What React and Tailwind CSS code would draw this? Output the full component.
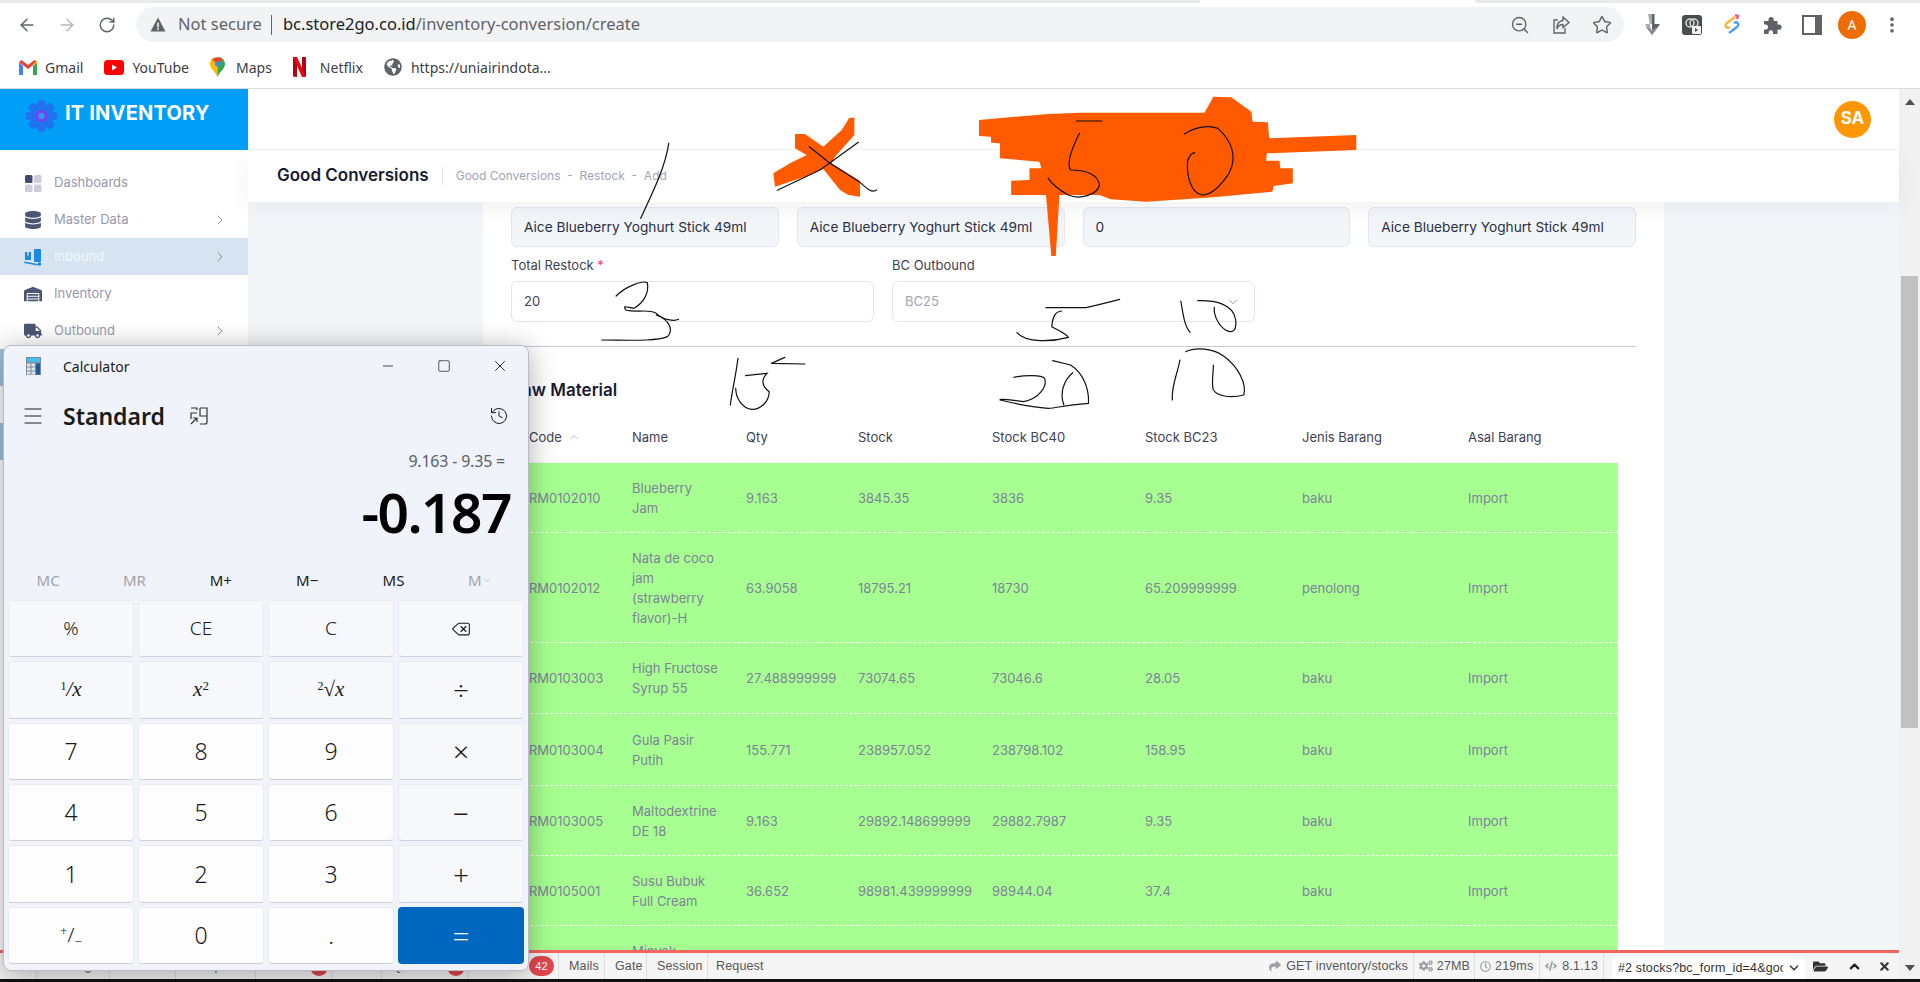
import React from "react";
import { ArrowLeft, ArrowRight, RotateCw, ZoomOut, Star, MoreVertical, ChevronRight, ChevronDown, ChevronUp, Delete, X, Minus, Square, Menu, History } from "lucide-react";
import { FaDatabase, FaTruck, FaWarehouse, FaCogs, FaRegClock, FaCode, FaFolderOpen, FaShare, FaGlobeAmericas } from "react-icons/fa";

const rows = [
  ["RM0102010", ["Blueberry", "Jam"], "9.163", "3845.35", "3836", "9.35", "baku", "Import"],
  ["RM0102012", ["Nata de coco", "jam", "(strawberry", "flavor)-H"], "63.9058", "18795.21", "18730", "65.209999999", "penolong", "Import"],
  ["RM0103003", ["High Fructose", "Syrup 55"], "27.488999999", "73074.65", "73046.6", "28.05", "baku", "Import"],
  ["RM0103004", ["Gula Pasir", "Putih"], "155.771", "238957.052", "238798.102", "158.95", "baku", "Import"],
  ["RM0103005", ["Maltodextrine", "DE 18"], "9.163", "29892.148699999", "29882.7987", "9.35", "baku", "Import"],
  ["RM0105001", ["Susu Bubuk", "Full Cream"], "36.652", "98981.439999999", "98944.04", "37.4", "baku", "Import"],
];
const rowPad = ["py-[14.5px]", "py-[14.5px]", "py-[15px]", "py-[15.5px]", "py-[14.5px]", "py-[14.5px]"];
const heads = ["Code", "Name", "Qty", "Stock", "Stock BC40", "Stock BC23", "Jenis Barang", "Asal Barang"];
const widths = ["w-[121px]", "w-[114px]", "w-[112px]", "w-[134px]", "w-[153px]", "w-[157px]", "w-[166px]", "w-[150px]"];

function Bookmark({ icon, label, cls }) {
  return (
    <div className={"flex items-center gap-[8px] " + cls}>
      {icon}
      <span>{label}</span>
    </div>
  );
}

function Chrome() {
  return (
    <div className="font-['Noto_Sans',sans-serif] text-[#5f6368]">
      <div className="h-[3px] flex bg-white">
        <div className="w-[1200px] bg-[#e8eaed]" />
        <div className="w-[275px]" />
        <div className="flex-1 bg-[#e8eaed] rounded-bl-[4px]" />
      </div>
      <div className="h-[43px] flex items-center bg-white">
        <ArrowLeft size={20} strokeWidth={1.8} className="ml-[17px]" />
        <ArrowRight size={20} strokeWidth={1.8} className="ml-[20px] text-[#b5b8bc]" />
        <RotateCw size={18} strokeWidth={1.9} className="ml-[21px]" />
        <div className="ml-[20px] w-[1488px] h-[35px] rounded-full bg-[#f1f3f4] flex items-center">
          <svg width="16" height="15" viewBox="0 0 16 15" className="ml-[14px] fill-[#5f6368]">
            <path d="M8 0.5 L15.5 14.5 H0.5 Z" />
            <rect x="7.2" y="5.5" width="1.6" height="5" fill="#f1f3f4" />
            <rect x="7.2" y="11.3" width="1.6" height="1.6" fill="#f1f3f4" />
          </svg>
          <span className="ml-[12px] text-[16.5px] text-[#5f6368]">Not secure</span>
          <span className="ml-[9px] w-px h-[20px] bg-[#5f6368]" />
          <span className="ml-[11px] text-[16.5px] text-[#5f6368]"><span className="text-[#202124]">bc.store2go.co.id</span>/inventory-conversion/create</span>
          <div className="ml-auto flex items-center mr-[12px] gap-[21px]">
            <ZoomOut size={20} strokeWidth={1.7} />
            <svg width="20" height="20" viewBox="0 0 20 20" fill="none" stroke="#5f6368" strokeWidth="1.4">
              <path d="M7 5 H3 V18 H14 V13" />
              <path d="M12 2 L18 7.5 L12 12.5 V9.5 C9 9.5 7 11 5.8 14 C5.8 9.5 8 6 12 5.5 Z" />
            </svg>
            <Star size={20} strokeWidth={1.7} />
          </div>
        </div>
        <div className="ml-[18px] flex items-center">
          <svg width="20" height="22" viewBox="0 0 20 22">
            <path d="M6 0 H10 V10 H3 L10 21 Z" fill="#a8abae" />
            <path d="M10 0 H12.5 V10 H18 L10 21 Z" fill="#5f6368" />
            <path d="M3 12 L10 21 L17 12 L10 16 Z" fill="#8c8f93" />
          </svg>
          <svg width="20" height="20" viewBox="0 0 20 20" className="ml-[20px]"><rect width="20" height="20" rx="3" fill="#4a4d50" /><circle cx="8" cy="8" r="4" fill="none" stroke="#ddd" strokeWidth="1.5" /><circle cx="12" cy="8" r="4" fill="none" stroke="#ddd" strokeWidth="1.5" /><rect x="10" y="11" width="9" height="8" rx="1" fill="#f3f3f3" /><path d="M13 13 L16 15 L13 17 Z" fill="#4a4d50" /></svg>
          <svg width="20" height="22" viewBox="0 0 20 22" fill="none" strokeWidth="2.4" className="ml-[20px]">
            <path d="M13 3 L5 9 C2 12 5 15 8 13" stroke="#f9b43a" />
            <path d="M7 19 L15 13 C18 10 15 7 12 9" stroke="#4f9df5" />
            <path d="M13 1 L16 2 L15 5" stroke="#f0569a" />
          </svg>
          <svg width="20" height="20" viewBox="0 0 20 20" className="ml-[20px] fill-[#5f6368]">
            <path d="M2 6 H6.5 V4.5 A2.6 2.6 0 0 1 11.7 4.5 V6 H15.5 V9.5 H17 A2.6 2.6 0 0 1 17 14.7 H15.5 V19 H11 V17.5 A2.2 2.2 0 0 0 6.6 17.5 V19 H2 V14.5 H3.5 A2.5 2.5 0 0 0 3.5 9.5 H2 Z" />
          </svg>
          <svg width="20" height="20" viewBox="0 0 20 20" className="ml-[20px]"><rect x="1" y="1" width="18" height="18" fill="none" stroke="#5f6368" strokeWidth="2" /><rect x="13" y="1" width="6" height="18" fill="#5f6368" /></svg>
          <div className="ml-[16px] w-[28px] h-[28px] rounded-full bg-[#ef6c00] text-white text-[14px] flex items-center justify-center">A</div>
          <MoreVertical size={20} strokeWidth={2.4} className="ml-[16px]" />
        </div>
      </div>
      <div className="h-[43px] bg-white border-b border-[#dadce0] flex items-center text-[14px] text-[#3c4043]">
        <Bookmark cls="ml-[19px]" label="Gmail" icon={
          <svg width="18" height="15" viewBox="0 0 18 15"><path d="M0 2 V15 H4 V6 Z" fill="#4285f4" /><path d="M18 2 V15 H14 V6 Z" fill="#34a853" /><path d="M0 2 L9 9 L18 2 L15.5 0 L9 5 L2.5 0 Z" fill="#ea4335" /><path d="M14 6 L18 3 V1 L14 4 Z" fill="#fbbc04" /></svg>
        } />
        <Bookmark cls="ml-[21px]" label="YouTube" icon={
          <svg width="20" height="15" viewBox="0 0 20 15"><rect width="20" height="15" rx="3.5" fill="#f00" /><path d="M8 4.5 L13 7.5 L8 10.5 Z" fill="#fff" /></svg>
        } />
        <Bookmark cls="ml-[21px]" label="Maps" icon={
          <svg width="15" height="20" viewBox="0 0 15 20" className="mr-[3px]"><path d="M7.5 0 C3 0 0 3 0 7 C0 12 5 14 7.5 20 Z" fill="#fbbc04" /><path d="M7.5 0 C12 0 15 3 15 7 C15 12 10 14 7.5 20 Z" fill="#34a853" /><path d="M2 2.5 C4 0.5 11 0 13 2.5 L7.5 7 Z" fill="#ea4335" /><circle cx="7.5" cy="7" r="2.5" fill="#4285f4" /></svg>
        } />
        <Bookmark cls="ml-[21px]" label="Netflix" icon={
          <svg width="13" height="20" viewBox="0 0 13 20" className="mr-[6px]"><path d="M0 0 H4 V20 L0 19.5 Z M9 0 H13 V19.5 L9 20 Z" fill="#b1060f" /><path d="M0 0 H4 L13 19.5 L9 20 Z" fill="#e50914" /></svg>
        } />
        <Bookmark cls="ml-[21px]" label="https://uniairindota..." icon={
          <FaGlobeAmericas size={18} className="text-[#5f6368] mr-[1px]" />
        } />
      </div>
    </div>
  );
}

function Sidebar() {
  const I = "w-[18px] h-[18px] text-[#4b5675]";
  const items = [
    { label: "Dashboards", icon: (
      <svg viewBox="0 0 18 18" className="w-[18px] h-[18px]"><rect x="1" y="1" width="7.5" height="8" rx="1.5" fill="#454870" /><rect x="10" y="1" width="7.5" height="8" rx="1.5" fill="#cdcddc" /><rect x="1" y="10.5" width="7.5" height="8" rx="1.5" fill="#cdcddc" /><rect x="10" y="10.5" width="7.5" height="8" rx="1.5" fill="#cdcddc" /></svg>
    ) },
    { label: "Master Data", chevron: true, icon: <FaDatabase className={I} /> },
    { label: "Inbound", chevron: true, active: true, icon: (
      <svg viewBox="0 0 18 18" className="w-[18px] h-[18px]">
        <path d="M1 4 H7 V12 H1 Z M4 4 V7" fill="#1e88e5" />
        <rect x="3.3" y="4" width="1.4" height="3.5" fill="#d6e4f2" />
        <rect x="10" y="1" width="7" height="13" rx="1" fill="#1e88e5" />
        <path d="M0.5 13.5 L14 16 L13.5 17.5 L0 15 Z" fill="#1e88e5" />
        <circle cx="15.5" cy="16" r="1.8" fill="#1e88e5" />
      </svg>
    ) },
    { label: "Inventory", icon: <FaWarehouse className={I} /> },
    { label: "Outbound", chevron: true, icon: <FaTruck className={I} /> },
  ];
  return (
    <div className="w-[248px] shrink-0 bg-white flex flex-col font-[Inter,sans-serif]">
      <div className="h-[61px] bg-[#009ef7] flex items-start pl-[26px] pt-[11px]">
        <svg width="31" height="32" viewBox="0 0 31 32">
          <g fill="#2272ee">
            <circle cx="15.5" cy="16" r="11.5" />
            <rect x="11.5" y="0" width="8" height="32" rx="3.5" />
            <rect x="11.5" y="0" width="8" height="32" rx="3.5" transform="rotate(45 15.5 16)" />
            <rect x="11.5" y="0" width="8" height="32" rx="3.5" transform="rotate(90 15.5 16)" />
            <rect x="11.5" y="0" width="8" height="32" rx="3.5" transform="rotate(135 15.5 16)" />
          </g>
          <circle cx="15.5" cy="16" r="4.5" fill="#2aa0ee" stroke="#7b3ff2" strokeWidth="2.8" />
        </svg>
        <span className="ml-[8px] text-white font-bold text-[20px] leading-[28px] -mt-[1px] tracking-[0.2px]">IT INVENTORY</span>
      </div>
      <div className="pt-[14px] text-[13px]">
        {items.map((it) => (
          <div key={it.label} className={"h-[37px] flex items-center pl-[24px] pr-[20px] " + (it.active ? "bg-[#d6e4f2] text-[#f3f7fb]" : "text-[#9899ac]")}>
            {it.icon}
            <span className="ml-[12px]">{it.label}</span>
            {it.chevron && <ChevronRight size={16} strokeWidth={1.5} className="ml-auto text-[#8a8d9e]" />}
          </div>
        ))}
        <div className="h-[37px] bg-[#a6c2e2]" />
        <div className="h-[37px]" />
        <div className="h-[37px] bg-[#a6c2e2]" />
      </div>
    </div>
  );
}

const fieldValue = "Aice Blueberry Yoghurt Stick 49ml";
function Field({ children }) {
  return (
    <div className="h-[40px] rounded-[6px] bg-[#f3f6f9] border border-[#e4e6ef] pl-[12px] flex items-center text-[13.7px] text-[#2b2f42] whitespace-nowrap">
      {children}
    </div>
  );
}

function Main() {
  return (
    <div className="flex-1 min-w-0 flex flex-col font-[Inter,sans-serif]">
      <div className="h-[61px] shrink-0 bg-white border-b border-[#eff2f5] flex items-center justify-end pr-[28px]">
        <div className="w-[37px] h-[37px] rounded-full bg-[#ff9800] text-white font-bold text-[17px] flex items-center justify-center">SA</div>
      </div>
      <div className="h-[52px] shrink-0 bg-white flex items-center pl-[29px] relative z-10 shadow-[0_8px_20px_rgba(80,90,110,0.07)]">
        <span className="text-[17px] font-semibold text-[#181c32]">Good Conversions</span>
        <span className="w-px h-[18px] bg-[#e4e6ef] ml-[13px]" />
        <span className="ml-[13px] text-[12px] text-[#a1a5b7]">Good Conversions&nbsp; -&nbsp; Restock&nbsp; -&nbsp; Add</span>
      </div>
      <div className="flex-1 min-h-0 overflow-hidden bg-[#f3f6f9] px-[235px]">
        <div className="bg-white h-[800px] px-[28px] pt-[5px]">
          <div className="grid grid-cols-4 gap-[18px]">
            <Field>{fieldValue}</Field>
            <Field>{fieldValue}</Field>
            <Field>0</Field>
            <Field>{fieldValue}</Field>
          </div>
          <div className="grid grid-cols-3 gap-[18px] mt-[9px]">
            <div>
              <div className="h-[18px] mb-[7px] text-[13px] leading-[18px] text-[#3f4254]">Total Restock <span className="text-[#f1416c]">*</span></div>
              <div className="h-[41px] rounded-[6px] border border-[#e4e6ef] pl-[12px] flex items-center text-[13px] text-[#3f4254]">20</div>
            </div>
            <div>
              <div className="h-[18px] mb-[7px] text-[13px] leading-[18px] text-[#3f4254]">BC Outbound</div>
              <div className="h-[41px] rounded-[6px] border border-[#e4e6ef] pl-[12px] pr-[14px] flex items-center text-[13px] text-[#a1a5b7]">
                BC25
                <ChevronDown size={14} strokeWidth={1.6} className="ml-auto text-[#8f94a8]" />
              </div>
            </div>
          </div>
          <div className="mt-[24px] h-px bg-[#c6c9ce]" />
          <div className="mt-[31px] h-[24px] leading-[24px] text-[17px] font-semibold text-[#181c32]">Raw Material</div>
          <table className="table-fixed w-[1107px] text-[13px]">
            <thead>
              <tr className="border-b border-dashed border-[#eff2f5]">
                {heads.map((h, i) => (
                  <th key={h} className={widths[i] + " font-normal text-left text-[#3f4254] pt-[26px] pb-[16px] leading-[18px] " + (i === 0 ? "pl-[18px]" : "")}>
                    <span className="inline-flex items-center">{h}{i === 0 && <ChevronUp size={12} strokeWidth={1.6} className="ml-[6px] text-[#a1a5b7]" />}</span>
                  </th>
                ))}
              </tr>
            </thead>
            <tbody className="bg-[#a6ff90] text-[#7e8299]">
              {rows.map((r, ri) => (
                <tr key={r[0]} className="border-b border-dashed border-[#f4fff0]">
                  {r.map((c, i) => (
                    <td key={i} className={rowPad[ri] + " leading-[20px] " + (i === 0 ? "pl-[18px]" : "")}>
                      {Array.isArray(c) ? c.map((l) => <div key={l}>{l}</div>) : c}
                    </td>
                  ))}
                </tr>
              ))}
              <tr>
                <td />
                <td className="py-[15px] leading-[20px]">Minyak</td>
                <td colSpan={6} />
              </tr>
            </tbody>
          </table>
        </div>
      </div>
    </div>
  );
}

function DebugItem({ w, label, badge }) {
  return (
    <div className={"h-full flex items-center pl-[10px] border-r border-[#ddd] shrink-0 gap-[10px] " + w}>
      {label}
      {badge && <span className="px-[6px] h-[20px] rounded-full bg-[#e0474c] text-white text-[11px] leading-[20px]">{badge}</span>}
    </div>
  );
}

function DebugBar() {
  return (
    <div className="h-[29px] shrink-0 border-t-[3px] border-[#f4645f] bg-[#f5f5f5] flex items-center text-[12.5px] tracking-[0.15px] text-[#555] font-['Liberation_Sans',sans-serif] relative z-10">
      <DebugItem w="w-[37px]" label="" />
      <DebugItem w="w-[73px]" label="Messages" />
      <DebugItem w="w-[66px]" label="Timeline" />
      <DebugItem w="w-[80px]" label="Exceptions" />
      <DebugItem w="w-[76px]" label="Views" badge="3" />
      <DebugItem w="w-[50px]" label="Route" />
      <DebugItem w="w-[86px]" label="Queries" badge="7" />
      <DebugItem w="w-[91px]" label="Models" badge="42" />
      <DebugItem w="w-[46px]" label="Mails" />
      <DebugItem w="w-[42px]" label="Gate" />
      <DebugItem w="w-[61px]" label="Session" />
      <div className="pl-[8px]">Request</div>
      <div className="ml-auto flex items-center h-full">
        <FaShare size={12} className="text-[#9aa0a6] mr-[5px]" />
        <span className="pr-[5px] border-r border-[#ddd] h-full flex items-center">GET inventory/stocks</span>
        <FaCogs size={14} className="text-[#9aa0a6] ml-[5px] mr-[4px]" />
        <span className="pr-[4px] border-r border-[#ddd] h-full flex items-center">27MB</span>
        <FaRegClock size={11} className="text-[#9aa0a6] ml-[5px] mr-[4px]" />
        <span className="pr-[6px] border-r border-[#ddd] h-full flex items-center">219ms</span>
        <FaCode size={12} className="text-[#9aa0a6] ml-[5px] mr-[5px]" />
        <span className="pr-[5px] border-r border-[#ddd] h-full flex items-center">8.1.13</span>
        <div className="ml-[8px] w-[193px] h-[22px] mt-[4px] bg-white rounded-[3px] flex items-center pl-[6px] pr-[4px]">
          <span className="w-[165px] overflow-hidden whitespace-nowrap text-[#333]">#2 stocks?bc_form_id=4&amp;goods_id=12</span>
          <ChevronDown size={14} strokeWidth={3} className="ml-auto text-[#444]" />
        </div>
        <FaFolderOpen size={15} className="ml-[8px] text-[#333]" />
        <ChevronUp size={15} strokeWidth={3.5} className="ml-[19px] text-[#222]" />
        <X size={13} strokeWidth={4} className="ml-[16px] mr-[8px] text-[#333]" />
      </div>
    </div>
  );
}

function CalcButton({ kind, children }) {
  const base = "rounded-[4px] flex items-center justify-center text-[#1a1a1a] ";
  const skin =
    kind === "eq" ? "bg-[#0067c0] text-white text-[30px] font-light"
    : kind === "num" ? "bg-[#fdfdfe] border border-[#e9ebf0] border-b-[#cfd1d6] text-[23px] font-light"
    : kind === "sym" ? "bg-[#f7f8fc] border border-[#e9ebf0] border-b-[#cfd1d6] text-[28px] font-light"
    : "bg-[#f7f8fc] border border-[#e9ebf0] border-b-[#cfd1d6] text-[19px] font-light";
  return <div className={base + skin}>{children}</div>;
}

function Calculator() {
  const serif = "font-['Liberation_Serif',serif] italic text-[21px]";
  return (
    <div className="absolute left-[3px] top-[345px] w-[526px] h-[626px] rounded-[8px] z-30 bg-[#f0f3f9] border border-[#b9bcc2] shadow-[0_4px_28px_rgba(0,0,0,0.33)] font-['Noto_Sans',sans-serif] text-[#1a1a1a] flex flex-col">
      <div className="h-[42px] pb-[2px] flex items-center shrink-0">
        <svg width="15" height="18" viewBox="0 0 15 18" className="ml-[22px]"><rect width="15" height="18" fill="#7f8a9a" /><rect x="1" y="1" width="13" height="4" fill="#3ec1f0" /><g fill="#dfe3ea"><rect x="1" y="6.5" width="3.5" height="3" /><rect x="5.5" y="6.5" width="3.5" height="3" /><rect x="1" y="10.5" width="3.5" height="3" /><rect x="5.5" y="10.5" width="3.5" height="3" /><rect x="1" y="14.5" width="3.5" height="3" /><rect x="5.5" y="14.5" width="3.5" height="3" /></g><rect x="10" y="6.5" width="4" height="11" fill="#1b5a9c" /></svg>
        <span className="ml-[22px] text-[14px]">Calculator</span>
        <Minus size={16} strokeWidth={1.2} className="ml-auto" />
        <Square size={14} strokeWidth={1.2} className="ml-[41px]" />
        <X size={18} strokeWidth={1.2} className="ml-[40px] mr-[19px]" />
      </div>
      <div className="h-[56px] flex items-center shrink-0">
        <Menu size={24} strokeWidth={1} className="ml-[17px]" />
        <span className="ml-[18px] text-[23px] font-semibold">Standard</span>
        <svg width="18" height="18" viewBox="0 0 18 18" fill="none" stroke="#333" strokeWidth="1.2" className="ml-[25px]">
          <path d="M7 6 H1 V12 M10 1 H17 V15 Q17 17 15 17 H10 M10 1 V9 H17 M1 1 H7 V3" />
          <path d="M1 17 L7 11 M3 11 H7 V15" />
        </svg>
        <History size={20} strokeWidth={1.2} className="ml-auto mr-[19px]" />
      </div>
      <div className="text-right pr-[23px] text-[16px] leading-[20px] text-[#5c5f66] mt-[7px] tracking-[-0.2px] shrink-0">9.163 - 9.35 =</div>
      <div className="text-right pr-[17px] text-[55px] leading-[64px] font-semibold text-black mt-[9px] tracking-[-1.5px] shrink-0">-0.187</div>
      <div className="grid grid-cols-6 text-[15px] mt-[25px] pl-[1px] pr-[5px] h-[22px] leading-[22px] text-center shrink-0">
        <span className="text-[#a0a3a8]">MC</span>
        <span className="text-[#a0a3a8]">MR</span>
        <span>M+</span>
        <span>M−</span>
        <span>MS</span>
        <span className="text-[#a0a3a8] inline-flex items-center justify-center">M<ChevronDown size={10} strokeWidth={1.4} /></span>
      </div>
      <div className="flex-1 grid grid-cols-4 grid-rows-6 gap-[4px] px-[4px] mt-[9px] mb-[6px]">
        <CalcButton>%</CalcButton>
        <CalcButton>CE</CalcButton>
        <CalcButton>C</CalcButton>
        <CalcButton><Delete size={20} strokeWidth={1.3} /></CalcButton>
        <CalcButton><span className={serif}><sup className="text-[12px] not-italic">1</sup>/x</span></CalcButton>
        <CalcButton><span className={serif}>x<sup className="text-[13px] not-italic">2</sup></span></CalcButton>
        <CalcButton><span className={serif}><sup className="text-[12px] not-italic">2</sup>√x</span></CalcButton>
        <CalcButton kind="sym">÷</CalcButton>
        <CalcButton kind="num">7</CalcButton>
        <CalcButton kind="num">8</CalcButton>
        <CalcButton kind="num">9</CalcButton>
        <CalcButton kind="sym">×</CalcButton>
        <CalcButton kind="num">4</CalcButton>
        <CalcButton kind="num">5</CalcButton>
        <CalcButton kind="num">6</CalcButton>
        <CalcButton kind="sym">−</CalcButton>
        <CalcButton kind="num">1</CalcButton>
        <CalcButton kind="num">2</CalcButton>
        <CalcButton kind="num">3</CalcButton>
        <CalcButton kind="sym">+</CalcButton>
        <CalcButton kind="num"><span className="text-[20px]"><sup className="text-[13px]">+</sup>/<sub className="text-[13px]">−</sub></span></CalcButton>
        <CalcButton kind="num">0</CalcButton>
        <CalcButton kind="num">.</CalcButton>
        <CalcButton kind="eq">=</CalcButton>
      </div>
    </div>
  );
}

function Scribbles() {
  const ink = { fill: "none", stroke: "#111", strokeWidth: 1.2, vectorEffect: "non-scaling-stroke", strokeLinecap: "round" };
  return (
    <svg className="absolute left-0 top-0 z-20 pointer-events-none" width="1920" height="982" viewBox="0 0 1920 982">
      <g transform="translate(760 95) scale(0.33333)">
        <path fill="#ff5a00" d="M105 117 L135 117 L190 155 L245 105 L268 68 L283 68 L283 120 L225 185 L215 205 L300 258 L300 305 L265 300 L240 285 L190 222 L135 245 L45 275 L40 235 L90 205 L140 180 L105 160 Z" />
        <path {...ink} d="M52 286 L180 225 L295 142 M148 155 L210 205 L300 262 C320 280 335 295 350 285" />
      </g>
      <g transform="translate(700 90) scale(0.44643 0.33333)">
        <path fill="#ff5a00" d="M625 90 L780 72 L850 68 L1130 68 L1150 20 L1190 22 L1235 65 L1238 95 L1272 97 L1275 145 L1470 135 L1470 180 L1270 190 L1268 212 L1298 212 L1300 235 L1328 235 L1328 280 L1285 288 L1282 305 L1150 322 L1000 335 L920 328 L895 315 L805 315 L797 498 L787 498 L775 315 L697 315 L697 272 L738 270 L738 235 L765 235 L760 215 L672 205 L672 160 L652 158 L652 140 L625 138 Z" />
        <path {...ink} d="M900 93 L843 93 M850 130 C835 170 820 220 830 240 C860 240 890 250 895 285 C890 315 850 330 825 315 C805 300 790 285 780 265" />
        <path {...ink} d="M1085 132 C1110 110 1140 105 1160 115 C1190 150 1205 200 1185 250 C1165 290 1145 315 1125 315 C1100 310 1090 260 1092 215 C1095 200 1100 190 1108 188" />
        <path {...ink} d="M775 653 L865 653 C890 645 920 635 940 628 M810 663 C795 665 790 680 788 710 C800 720 820 730 825 742 C790 755 730 760 710 728" />
        <path {...ink} d="M1077 633 C1082 670 1085 710 1098 727 M1115 632 C1150 630 1195 640 1200 690 C1202 720 1195 730 1180 722 C1165 712 1150 680 1152 652" />
        <path {...ink} d="M85 805 C80 860 72 900 68 945 M160 820 L235 822 M160 820 L190 802 M102 857 L150 850 C135 870 140 890 155 905 C155 935 135 960 115 958 C95 955 80 925 80 895" />
        <path {...ink} d="M703 862 C730 855 765 855 772 865 C778 890 760 925 725 935 C700 930 670 925 672 930 C690 935 730 950 780 955 C800 955 810 945 870 940 C872 900 860 850 830 825 L790 812 M835 848 C815 870 805 910 815 945" />
        <path {...ink} d="M1075 810 C1070 850 1055 890 1058 930 M1088 785 C1110 770 1150 775 1175 800 C1205 830 1225 880 1218 915 C1190 925 1160 920 1150 900 C1145 880 1150 850 1150 825" />
      </g>
      <g transform="scale(0.44643 0.33333)">
        <path {...ink} d="M1498 430 C1490 500 1465 570 1435 655" />
        <path {...ink} d="M1380 888 C1400 860 1440 840 1450 848 C1455 880 1440 910 1420 925 C1400 920 1395 915 1402 930 C1425 940 1450 925 1470 940 C1485 960 1510 965 1520 958 M1470 945 C1500 960 1510 990 1495 1010 C1470 1025 1400 1020 1348 1020" />
      </g>
    </svg>
  );
}

export default function App() {
  return (
    <div className="relative w-[1920px] h-[982px] overflow-hidden flex flex-col bg-white">
      <Chrome />
      <div className="flex-1 min-h-0 flex">
        <div className="w-[1899px] flex flex-col">
          <div className="flex-1 min-h-0 flex">
            <Sidebar />
            <Main />
          </div>
          <DebugBar />
        </div>
        <div className="w-[21px] bg-[#f1f1f1] flex flex-col items-center relative">
          <div className="mt-[10px] w-0 h-0 border-x-[5px] border-x-transparent border-b-[6px] border-b-[#505050]" />
          <div className="mt-[171px] w-[17px] h-[452px] bg-[#c1c1c1]" />
          <div className="mt-auto mb-[8px] w-0 h-0 border-x-[5px] border-x-transparent border-t-[6px] border-t-[#505050]" />
        </div>
      </div>
      <div className="h-[3px] shrink-0 bg-[#111]" />
      <Scribbles />
      <Calculator />
    </div>
  );
}
